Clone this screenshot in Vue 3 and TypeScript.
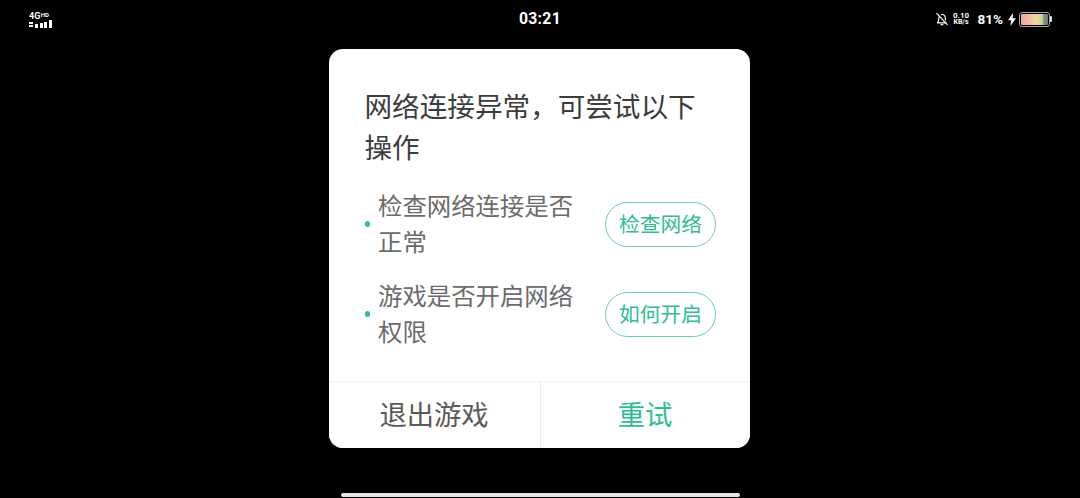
<script setup lang="ts">
interface Row { text: string; action: string }
const rows: Row[] = [
  { text: '检查网络连接是否正常', action: '检查网络' },
  { text: '游戏是否开启网络权限', action: '如何开启' },
]
const signalBars: number[] = [4, 5, 6, 8]
</script>

<template>
  <div class="screen">
    <header class="status">
      <div class="net">
        <div class="net-top">4G<span class="hd">HD</span></div>
        <div class="net-bars">
          <span class="dots"></span>
          <span v-for="h in signalBars" :key="h" class="bar" :class="'h' + h"></span>
        </div>
      </div>
      <div class="clock">03:21</div>
      <div class="tray">
        <svg class="bell" viewBox="0 0 14 14" width="14" height="14" fill="none" stroke="#fff" stroke-width="1.2">
          <path d="M2 10.800h9.500M2.400 10.800c1.100-1 1.400-2.200 1.400-4.300 0-1 .3-1.800.8-2.400M5.900 2.800C8.200 1.800 10.400 3.500 10.400 6.500v2" />
          <path d="M5.600 12.700h2.800" />
          <path d="M1.500 1.200l11 11.600" />
        </svg>
        <div class="speed"><span>0.10</span><span class="unit">KB/s</span></div>
        <div class="pct">81%</div>
        <svg class="bolt" viewBox="0 0 8 13" width="8" height="13"><path d="M5 0 0 7.200h3L2.400 13 8 5.300H4.700z" fill="#fff" /></svg>
        <div class="battery"><div class="fill"></div></div>
        <div class="nub"></div>
      </div>
    </header>

    <main class="stage">
      <section class="dialog">
        <div class="content">
          <h1 class="title">网络连接异常，可尝试以下操作</h1>
          <div class="rows">
            <div v-for="row in rows" :key="row.action" class="row">
              <span class="dot"></span>
              <p class="row-text">{{ row.text }}</p>
              <button class="pill" type="button">{{ row.action }}</button>
            </div>
          </div>
        </div>
        <footer class="actions">
          <button class="act quit" type="button">退出游戏</button>
          <button class="act retry" type="button">重试</button>
        </footer>
      </section>
    </main>

    <div class="home-row"><div class="home"></div></div>
  </div>
</template>

<style>
html, body { margin: 0; background: #000; }
</style>

<style scoped>
.screen {
  width: 1080px;
  height: 498px;
  background: #000;
  display: flex;
  flex-direction: column;
  overflow: hidden;
  font-family: "Noto Sans CJK SC", "Noto Sans", sans-serif;
}
.status {
  height: 49px;
  flex: none;
  display: grid;
  grid-template-columns: 1fr auto 1fr;
  align-items: start;
  color: #fff;
  font-family: Roboto, "Noto Sans", sans-serif;
}
.net { padding: 11px 0 0 29px; }
.net-top { font-size: 9px; line-height: 7px; font-weight: 700; }
.hd { font-size: 6px; vertical-align: 2px; margin-left: 0.5px; }
.net-bars { display: flex; align-items: flex-end; gap: 1.200px; height: 8px; }
.dots { width: 4px; height: 6px; margin-right: 1px; background: repeating-linear-gradient(#fff 0 2px, #000 2px 3px); }
.bar { width: 3.300px; background: #fff; }
.h4 { height: 4px; }
.h5 { height: 5px; }
.h6 { height: 6px; }
.h8 { height: 8px; }
.clock { padding-top: 9px; font-size: 15.800px; line-height: 20px; font-weight: 700; letter-spacing: 0.3px; }
.tray { display: flex; justify-content: flex-end; align-items: center; padding: 11px 28px 0 0; height: 16px; }
.bell { margin-right: 4px; }
.speed { display: flex; flex-direction: column; align-items: center; font-size: 8px; line-height: 7px; font-weight: 700; width: 17px; margin-right: 8px; }
.unit { font-size: 7px; }
.pct { font-size: 13.500px; font-weight: 700; margin-right: 5px; }
.bolt { margin-right: 3px; }
.battery { width: 31px; height: 15px; box-sizing: border-box; border: 1px solid #a8a8a8; border-radius: 3px; padding: 1px; }
.fill { width: 100%; height: 100%; border-radius: 1px; background: linear-gradient(90deg, #f3a5a8 0%, #f4c2a5 35%, #e9dc95 60%, #b6cf9a 80%, #8c9a8a 81%, #6f7a6e 100%); }
.nub { width: 2px; height: 6px; background: #ddd; border-radius: 0 1px 1px 0; }
.stage { flex: none; height: 399px; display: flex; justify-content: center; padding-right: 1px; }
.dialog {
  width: 421px;
  height: 399px;
  background: #fff;
  border-radius: 14px;
  display: flex;
  flex-direction: column;
  overflow: hidden;
}
.content { flex: 1; padding: 36px 34px 0 35.500px; }
.title {
  margin: 0;
  font-size: 27.600px;
  line-height: 41px;
  font-weight: 400;
  color: #3c3c3c;
}
.rows { margin-top: 21px; display: flex; flex-direction: column; gap: 18px; }
.row { display: flex; align-items: center; height: 72px; }
.dot { width: 5.500px; height: 5.500px; border-radius: 50%; background: #2ec095; flex: none; margin-right: 8px; }
.row-text {
  margin: 0 0 2px;
  width: 200px;
  font-size: 24.400px;
  line-height: 36px;
  color: #6b6b6b;
}
.pill {
  margin-left: auto;
  width: 111px;
  height: 45px;
  padding: 0 0 1px;
  box-sizing: border-box;
  border: 1.500px solid #6fcbad;
  border-radius: 23px;
  background: #fff;
  color: #2fbd92;
  font-family: inherit;
  font-size: 20.700px;
  line-height: 1;
}
.actions { flex: none; height: 67px; box-sizing: border-box; display: flex; border-top: 1px solid #f0f0f0; }
.act {
  border: 0;
  padding: 0 0 2px;
  background: #fff;
  font-family: inherit;
  font-size: 27.300px;
  line-height: 1;
}
.quit { width: 212px; flex: none; padding-right: 1px; color: #5a5a5a; border-right: 1px solid #ededed; }
.retry { flex: 1; padding-right: 1px; color: #2fbd92; }
.home-row { flex: 1; display: flex; justify-content: center; align-items: flex-end; padding-bottom: 1px; }
.home { width: 399px; height: 4px; border-radius: 2px; background: #e6e6e6; }
</style>
